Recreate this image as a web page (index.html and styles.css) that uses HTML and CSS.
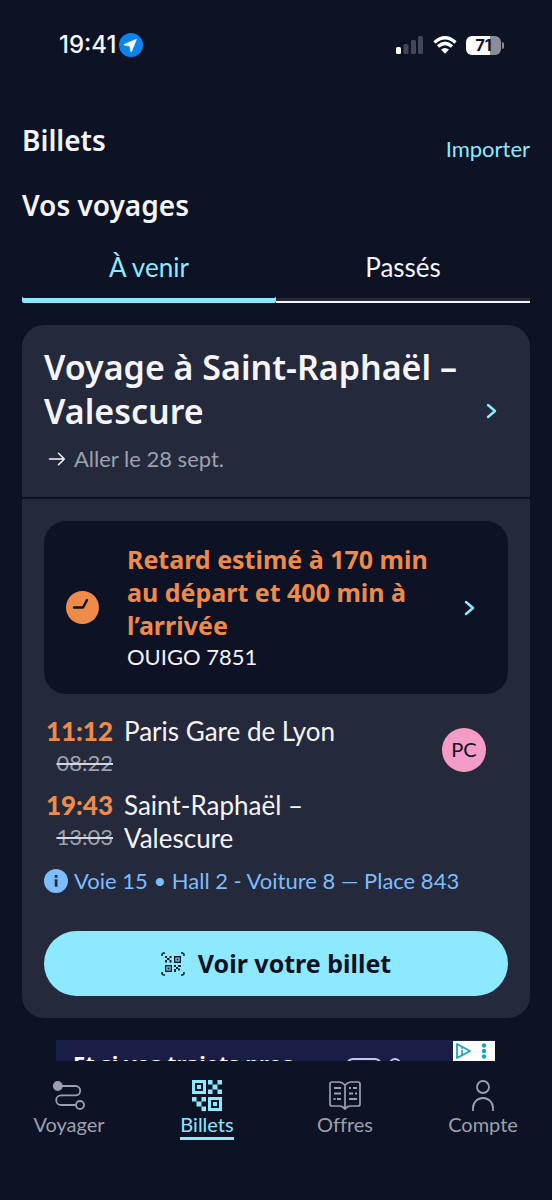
FILE: index.html
```html
<!DOCTYPE html>
<html lang="fr">
<head>
<meta charset="utf-8">
<meta name="viewport" content="width=device-width, initial-scale=1">
<title>Billets</title>
<link rel="stylesheet" href="styles.css">
</head>
<body>
<div class="app">
  <div class="status">
    <div class="status-left">
      <span>19:41</span>
      <svg width="24" height="24" viewBox="0 0 24 24" aria-hidden="true"><circle cx="12" cy="12" r="12" fill="#0c84ee"/><path d="M17.5 6.2 5.6 11.2q-1 .6.1 1l5.2.8.7 5.2q.5 1.1 1.1.1z" fill="#fff" stroke="#fff" stroke-width=".6" stroke-linejoin="round"/></svg>
    </div>
    <div class="status-right">
      <svg width="28" height="18" viewBox="0 0 28 18" aria-hidden="true"><rect x="0" y="11" width="5" height="7" rx="1.5" fill="#fff"/><g fill="#44475a"><rect x="7.500" y="8" width="5" height="10" rx="1.500"/><rect x="15" y="4" width="5" height="14" rx="1.500"/><rect x="22" y="0" width="5" height="18" rx="1.500"/></g></svg>
      <svg width="24" height="18" viewBox="0 0 24 18" aria-hidden="true"><g fill="none" stroke="#fff" stroke-width="3.400"><path d="M1.500 6.500Q12-2.800 22.500 6.500"/><path d="M5 10.600Q12 4.200 19 10.600"/></g><path d="M8 13.600Q12 10.200 16 13.600L12 17.700z" fill="#fff"/></svg>
      <div class="battery"><span>71</span></div>
    </div>
  </div>

  <main class="content">
    <header class="top">
      <h1>Billets</h1>
      <button class="import" type="button">Importer</button>
    </header>
    <h2 class="section-title">Vos voyages</h2>
    <div class="tabs" role="tablist">
      <button class="tab selected" type="button" role="tab" aria-selected="true">À venir</button>
      <button class="tab" type="button" role="tab" aria-selected="false">Passés</button>
    </div>

    <article class="card">
      <a class="trip" href="#voyage">
        <div class="trip-text">
          <h3>Voyage à Saint-Raphaël – Valescure</h3>
          <p class="direction">
            <svg width="18" height="14" viewBox="0 0 18 14" fill="none" stroke="#f4f4fa" stroke-width="1.500" stroke-linecap="round" stroke-linejoin="round" aria-hidden="true"><path d="M1.500 7h14.800M10.500 1.200 16.300 7l-5.800 5.800"/></svg>
            Aller le 28 sept.
          </p>
        </div>
        <svg class="chevron" width="12" height="18" viewBox="0 0 12 18" aria-hidden="true"><path d="m2 4 7 6-7 6"/></svg>
      </a>
      <div class="details">
        <a class="alert" href="#retard">
          <svg class="clock" width="33" height="33" viewBox="0 0 33 33" aria-hidden="true"><circle cx="16.500" cy="16.500" r="16.500" fill="#ee8b49"/><path d="M8 16.500h9l4-7.500" fill="none" stroke="#0d1225" stroke-width="2.400" stroke-linecap="round" stroke-linejoin="round"/></svg>
          <div class="alert-text">
            <strong>Retard estimé à 170 min au départ et 400 min à l’arrivée</strong>
            <span>OUIGO 7851</span>
          </div>
          <svg class="chevron" width="12" height="18" viewBox="0 0 12 18" aria-hidden="true"><path d="m2 3 7 6-7 6"/></svg>
        </a>
        <div class="journey">
          <ol class="stops">
            <li><div class="times"><time>11:12</time><s>08:22</s></div><span>Paris Gare de Lyon</span></li>
            <li><div class="times"><time>19:43</time><s>13:03</s></div><span>Saint-Raphaël – Valescure</span></li>
          </ol>
          <span class="avatar">PC</span>
        </div>
        <p class="info">
          <svg width="24" height="24" viewBox="0 0 24 24" aria-hidden="true"><circle cx="12" cy="12" r="12" fill="#7cbdfb"/><g fill="#24293c"><rect x="10.700" y="6" width="2.800" height="2.800" rx=".6"/><path d="M10.700 10.300h2.800v7.400h-2.800z"/></g></svg>
          Voie 15 • Hall 2 - Voiture 8 — Place 843
        </p>
        <button class="cta" type="button">
          <svg width="24" height="24" viewBox="0 0 24 24" aria-hidden="true"><path d="M1 4V3q0-2 2-2h1M20 1h1q2 0 2 2v1M1 20v1q0 2 2 2h1M20 23h1q2 0 2-2v-1" fill="none" stroke="#0d1b2c" stroke-width="1.500"/><path d="M13.700 4.700h5.600v5.600h-5.600zM4.700 13.700h5.600v5.600H4.700z" fill="none" stroke="#0d1b2c" stroke-width="1.400"/><path d="M15.500 6.500h2v2h-2zM6.500 15.500h2v2h-2zM4 4h2v2H4zM8.500 4h2v2h-2zM6 6h2.500v2H6zM4 8h2v2.500H4zM8.500 8h2v2.500h-2zM17 13h3v2h-3zM15 15h2v2h-2zM13 13h2v2h-2zM13 17h2v3h-2zM17 16.500h2v2h-2z" fill="#0d1b2c"/></svg>
          Voir votre billet
        </button>
      </div>
    </article>

    <aside class="ad">
      <span class="ad-text">Et si vos trajets pros</span>
      <svg class="ad-art" width="60" height="22" viewBox="0 0 60 22" aria-hidden="true"><rect x="1" y="2" width="34" height="26" rx="6" fill="none" stroke="#c5c8de" stroke-width="2"/><circle cx="49" cy="7" r="5" fill="none" stroke="#c5c8de" stroke-width="2"/></svg>
      <button class="ad-badge" type="button" aria-label="Options de l’annonce">
        <svg width="42" height="20" viewBox="0 0 42 20" aria-hidden="true"><path d="M4 3v14l13-7z" fill="none" stroke="#16a5bd" stroke-width="1.800" stroke-linejoin="round"/><path d="M8.200 6.300h1.600v1.600H8.200zM8.200 9h1.600v5H8.200z" fill="#16a5bd"/><g fill="#16a5bd"><circle cx="31" cy="4.500" r="2.200"/><circle cx="31" cy="10" r="2.200"/><circle cx="31" cy="15.500" r="2.200"/></g></svg>
      </button>
    </aside>
  </main>

  <nav class="nav">
    <a href="#voyager">
      <svg width="32" height="32" viewBox="0 0 32 32" fill="none" stroke="#9da0ad" stroke-width="1.800" aria-hidden="true"><circle cx="4.800" cy="6" r="4" fill="#9da0ad"/><path d="M8 6h14.500a4.700 4.700 0 0 1 0 9.400H8a4.800 4.800 0 0 0 0 9.600h14.500"/><circle cx="27" cy="25" r="4"/></svg>
      <span>Voyager</span>
    </a>
    <a class="current" href="#billets" aria-current="page">
      <svg width="32" height="32" viewBox="0 0 32 32" fill="#8de9ff" aria-hidden="true"><path fill-rule="evenodd" d="M1 0h14v14H1zM4 3v8h8V3zM17 17h14v14H17zM20 20v8h8v-8z"/><path d="M6 5h4v4H6zM22 22h4v4h-4zM17 0h4.500v4.500H17zM26.500 0H31v4.500h-4.500zM21.500 4.500h5v5h-5zM17 9.500h4.500V14H17zM26.500 9.500H31V14h-4.500zM1 17h4.500v4.500H1zM10.500 17H15v4.500h-4.500zM5.500 21.500h5v5h-5zM10.500 26.500H15V31h-4.500z"/></svg>
      <span>Billets</span>
    </a>
    <a href="#offres">
      <svg width="34" height="32" viewBox="0 0 34 32" fill="none" stroke="#9da0ad" stroke-width="1.700" stroke-linejoin="round" aria-hidden="true"><path d="M17 5Q14 2 11 2H4Q2 2 2 4v20q0 2 2 2h7q4 0 6 3 2-3 6-3h7q2 0 2-2V4q0-2-2-2h-7q-3 0-6 3zv24"/><path d="M6 8h7M6 13.500h7M9 19h4M21 8h2M25 8h4M21 13.500h4M27 13.500h2M21 19h8M5.500 19h2" stroke-width="2.200"/></svg>
      <span>Offres</span>
    </a>
    <a href="#compte">
      <svg width="32" height="32" viewBox="0 0 32 32" fill="none" stroke="#9da0ad" stroke-width="1.800" aria-hidden="true"><circle cx="16" cy="7" r="6"/><path d="M6 31v-3a10 10 0 0 1 20 0v3"/></svg>
      <span>Compte</span>
    </a>
  </nav>
</div>
</body>
</html>
```
FILE: styles.css
```css
* { box-sizing: border-box; }
body {
  margin: 0;
  background: #0d1225;
  color: #f4f4fa;
  font: 26px/33px Lato, "Liberation Sans", sans-serif;
  font-variant-ligatures: none;
}
h1, h2, h3, p, ol { margin: 0; padding: 0; }
a { color: inherit; text-decoration: none; }
button { border: 0; background: none; color: inherit; font: inherit; padding: 0; }
svg { display: block; flex: none; }

.app { height: 100vh; display: flex; flex-direction: column; }

.status {
  display: flex;
  justify-content: space-between;
  align-items: center;
  padding: 29px 51px 0 59px;
  font: 500 24px/32px Inter, sans-serif;
}
.status-left { display: flex; align-items: center; gap: 3px; }
.status-right { display: flex; align-items: center; gap: 9px; }
.battery {
  width: 35px;
  height: 19px;
  border-radius: 6px;
  background: linear-gradient(90deg, #fff 70%, #8c8d98 70%);
  color: #0d1225;
  font: 700 16px/19px Inter, sans-serif;
  text-align: center;
  position: relative;
}
.battery::after {
  content: "";
  position: absolute;
  left: 36px;
  top: 6px;
  width: 2px;
  height: 7px;
  border-radius: 0 2px 2px 0;
  background: #8c8d98;
}

.content {
  flex: 1;
  min-height: 0;
  overflow-y: auto;
  scrollbar-width: none;
  padding: 60px 22px 0;
}
.top { display: flex; justify-content: space-between; align-items: flex-start; }
.top h1, .section-title { font: 600 28px/38px "Noto Sans", sans-serif; }
.import { margin-top: 11px; color: #8de9ff; font-size: 22px; }
.section-title { margin-top: 21px; }
.tabs { display: grid; grid-template-columns: 1fr 1fr; margin-top: 20px; }
.tab {
  height: 59px;
  padding-bottom: 13px;
  box-shadow: inset 0 -2px #f4f4fa, inset 0 -5px #24293c;
}
.tab.selected {
  color: #8de9ff;
  border-radius: 2px;
  box-shadow: inset 0 -5px #8de9ff;
}

.card { margin-top: 22px; border-radius: 22px; background: #24293c; }
.trip {
  display: flex;
  align-items: center;
  padding: 20px 32px 22px 22px;
  border-bottom: 2px solid #0d1225;
}
.trip-text { flex: 1; }
.trip h3 { font: 600 34px/44px "Noto Sans", sans-serif; }
.direction {
  display: flex;
  align-items: center;
  gap: 8px;
  margin-top: 9px;
  padding-left: 4px;
  color: #9da0ad;
  font-size: 22px;
}
.chevron { fill: none; stroke: #8de9ff; stroke-width: 2.5; stroke-linecap: round; stroke-linejoin: round; }

.details { padding: 22px; }
.alert {
  display: flex;
  align-items: center;
  gap: 28px;
  padding: 22px 32px 22px 22px;
  border-radius: 22px;
  background: #0d1225;
}
.alert-text { flex: 1; display: flex; flex-direction: column; }
.alert-text strong { color: #ee8b49; font: 700 25px/33px "Noto Sans", sans-serif; }
.alert-text span { font-size: 22px; line-height: 30px; }

.journey { display: flex; align-items: flex-start; justify-content: space-between; margin-top: 21px; padding-right: 22px; }
.stops { list-style: none; display: grid; gap: 11px; flex: 1; max-width: 320px; }
.stops li { display: flex; gap: 11px; }
.times { flex: none; width: 69px; display: flex; flex-direction: column; text-align: right; }
.times time { color: #ee8b49; font-weight: 900; }
.times s { color: #9da0ad; font-size: 22px; line-height: 30px; text-decoration-color: #d5d6df; }
.avatar {
  width: 44px;
  height: 44px;
  margin-top: 13px;
  border-radius: 50%;
  background: #f49cc5;
  color: #0d1225;
  font-size: 20px;
  line-height: 43px;
  text-align: center;
}
.info { display: flex; align-items: center; gap: 6px; margin-top: 9px; color: #7cbdfb; font-size: 22px; }
.cta {
  display: flex;
  align-items: center;
  justify-content: center;
  gap: 13px;
  width: 100%;
  height: 65px;
  margin-top: 34px;
  border-radius: 33px;
  background: #8de9ff;
  color: #0d1225;
  font: 700 25px/33px "Noto Sans", sans-serif;
}

.ad {
  display: flex;
  align-items: flex-start;
  margin: 22px 35px 0 34px;
  height: 100px;
  padding-left: 17px;
  background: #191e47;
}
.ad-text { flex: 1; margin-top: 8px; color: #fff; font: 700 22px/30px "Noto Sans", sans-serif; }
.ad-art { margin: 17px 47px 0 0; }
.ad-badge { background: #fff; margin-top: 1px; }

.nav {
  display: grid;
  grid-template-columns: repeat(4, 1fr);
  height: 139px;
  padding-top: 19px;
  color: #9da0ad;
  font-size: 20px;
  line-height: 24px;
}
.nav a { display: flex; flex-direction: column; align-items: center; }
.nav .current { color: #8de9ff; }
.nav .current span { padding-bottom: 1px; border-bottom: 3px solid #8de9ff; }
```
